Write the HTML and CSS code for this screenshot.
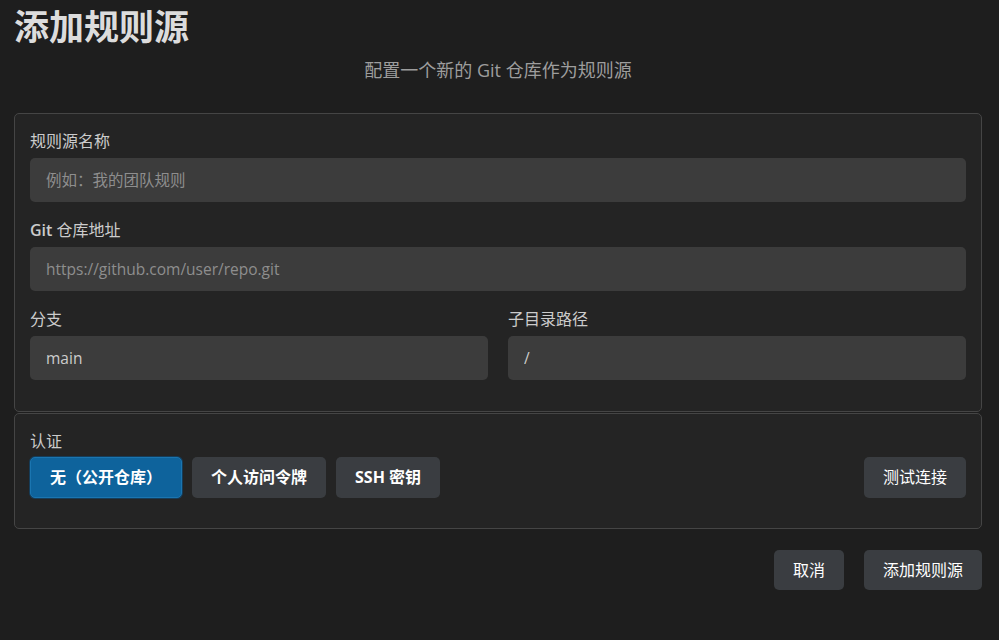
FILE: index.html
```html
<!DOCTYPE html>
<html lang="zh-CN">
<head>
<meta charset="utf-8">
<title>添加规则源</title>
<link rel="stylesheet" href="styles.css">
</head>
<body>
<div class="page">
  <h1 class="title">添加规则源</h1>
  <p class="subtitle">配置一个新的 Git 仓库作为规则源</p>

  <section class="card">
    <div class="field">
      <label class="label">规则源名称</label>
      <input class="input" type="text" placeholder="例如：我的团队规则">
    </div>
    <div class="field">
      <label class="label"><span class="latin">Git</span> 仓库地址</label>
      <input class="input" type="text" placeholder="https://github.com/user/repo.git">
    </div>
    <div class="row">
      <div class="field">
        <label class="label">分支</label>
        <input class="input" type="text" value="main">
      </div>
      <div class="field">
        <label class="label">子目录路径</label>
        <input class="input" type="text" value="/">
      </div>
    </div>
  </section>

  <section class="card card-auth">
    <label class="label">认证</label>
    <div class="auth-row">
      <button class="btn btn-toggle active">无（公开仓库）</button>
      <button class="btn btn-toggle">个人访问令牌</button>
      <button class="btn btn-toggle">SSH 密钥</button>
      <button class="btn btn-test">测试连接</button>
    </div>
  </section>

  <div class="actions">
    <button class="btn">取消</button>
    <button class="btn">添加规则源</button>
  </div>
</div>
</body>
</html>
```

FILE: styles.css
```css
* { box-sizing: border-box; }

html, body {
  margin: 0;
  background: #1e1e1e;
}

body {
  font-family: "Open Sans", "Noto Sans CJK SC", sans-serif;
  color: #cccccc;
  font-size: 16px;
}

.page {
  padding: 0 17px 0 14px;
}

.title {
  margin: 1px 0 0;
  font-size: 35px;
  line-height: 48px;
  font-weight: 700;
  color: #dcdcdc;
  font-family: "Noto Sans CJK SC", sans-serif;
}

.subtitle {
  margin: 8px 0 0;
  text-align: center;
  font-size: 18px;
  line-height: 26px;
  color: #9d9d9d;
}

.card {
  margin-top: 30px;
  background: #242424;
  border: 1px solid #454545;
  border-radius: 5px;
  padding: 16px 15px 14px;
}

.card-auth {
  margin-top: 1px;
  padding: 16px 15px 30px;
}

.field {
  margin-bottom: 17px;
}

.row {
  display: grid;
  grid-template-columns: 1fr 1fr;
  gap: 20px;
}

.label {
  display: block;
  font-size: 16px;
  line-height: 22px;
  color: #cccccc;
  margin-bottom: 6px;
}

.card-auth .label {
  margin-bottom: 5px;
}

.latin {
  font-weight: 600;
}

.input {
  display: block;
  width: 100%;
  height: 44px;
  border: none;
  border-radius: 5px;
  background: #3c3c3c;
  color: #cccccc;
  font-family: "Open Sans", "Noto Sans CJK SC", sans-serif;
  font-size: 15.5px;
  padding: 0 16px;
  outline: none;
}

.input::placeholder {
  color: #8e8e8e;
}

.auth-row {
  display: flex;
  gap: 10px;
  align-items: center;
}

.btn {
  font-family: "Open Sans", "Noto Sans CJK SC", sans-serif;
  font-size: 16px;
  line-height: 21px;
  height: 41px;
  padding: 0 18px;
  border: 1px solid transparent;
  border-radius: 5px;
  background: #3a3d41;
  color: #ffffff;
  cursor: pointer;
}

.btn-toggle {
  font-weight: 700;
}

.btn-toggle.active {
  background: #0e639c;
  border-color: #1a75b0;
  box-shadow: 0 0 0 1px #163c58;
  padding: 0 19px;
}

.btn-test {
  margin-left: auto;
}

.actions {
  display: flex;
  justify-content: flex-end;
  gap: 20px;
  margin-top: 21px;
}

.actions .btn {
  height: 40px;
}
```
